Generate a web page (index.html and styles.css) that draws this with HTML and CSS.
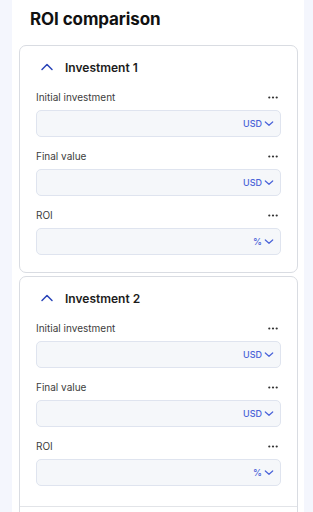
FILE: index.html
```html
<!DOCTYPE html>
<html>
<head>
<meta charset="utf-8">
<link rel="stylesheet" href="styles.css">
</head>
<body>
<div class="panel">
  <h1 class="title">ROI comparison</h1>

  <section class="card">
    <div class="card-head">
      <svg class="chev-up" width="14" height="10" viewBox="0 0 14 10"><path d="M2 7.5 L7 2.5 L12 7.5" fill="none" stroke="#2a45b8" stroke-width="1.5" stroke-linecap="round" stroke-linejoin="round"/></svg>
      <span class="card-title">Investment 1</span>
    </div>
    <div class="field">
      <div class="field-top"><span class="label">Initial investment</span><svg class="dots" width="10" height="3" viewBox="0 0 10 3"><circle cx="1.3" cy="1.5" r="1.1"/><circle cx="5" cy="1.5" r="1.1"/><circle cx="8.7" cy="1.5" r="1.1"/></svg></div>
      <div class="input"><span class="unit">USD</span><svg class="chev" width="10" height="7" viewBox="0 0 10 7"><path d="M1.3 2 L5 5.3 L8.7 2" fill="none" stroke="#4a63d8" stroke-width="1.2" stroke-linecap="round" stroke-linejoin="round"/></svg></div>
    </div>
    <div class="field">
      <div class="field-top"><span class="label">Final value</span><svg class="dots" width="10" height="3" viewBox="0 0 10 3"><circle cx="1.3" cy="1.5" r="1.1"/><circle cx="5" cy="1.5" r="1.1"/><circle cx="8.7" cy="1.5" r="1.1"/></svg></div>
      <div class="input"><span class="unit">USD</span><svg class="chev" width="10" height="7" viewBox="0 0 10 7"><path d="M1.3 2 L5 5.3 L8.7 2" fill="none" stroke="#4a63d8" stroke-width="1.2" stroke-linecap="round" stroke-linejoin="round"/></svg></div>
    </div>
    <div class="field">
      <div class="field-top"><span class="label">ROI</span><svg class="dots" width="10" height="3" viewBox="0 0 10 3"><circle cx="1.3" cy="1.5" r="1.1"/><circle cx="5" cy="1.5" r="1.1"/><circle cx="8.7" cy="1.5" r="1.1"/></svg></div>
      <div class="input"><span class="unit">%</span><svg class="chev" width="10" height="7" viewBox="0 0 10 7"><path d="M1.3 2 L5 5.3 L8.7 2" fill="none" stroke="#4a63d8" stroke-width="1.2" stroke-linecap="round" stroke-linejoin="round"/></svg></div>
    </div>
  </section>

  <section class="card">
    <div class="card-head">
      <svg class="chev-up" width="14" height="10" viewBox="0 0 14 10"><path d="M2 7.5 L7 2.5 L12 7.5" fill="none" stroke="#2a45b8" stroke-width="1.5" stroke-linecap="round" stroke-linejoin="round"/></svg>
      <span class="card-title">Investment 2</span>
    </div>
    <div class="field">
      <div class="field-top"><span class="label">Initial investment</span><svg class="dots" width="10" height="3" viewBox="0 0 10 3"><circle cx="1.3" cy="1.5" r="1.1"/><circle cx="5" cy="1.5" r="1.1"/><circle cx="8.7" cy="1.5" r="1.1"/></svg></div>
      <div class="input"><span class="unit">USD</span><svg class="chev" width="10" height="7" viewBox="0 0 10 7"><path d="M1.3 2 L5 5.3 L8.7 2" fill="none" stroke="#4a63d8" stroke-width="1.2" stroke-linecap="round" stroke-linejoin="round"/></svg></div>
    </div>
    <div class="field">
      <div class="field-top"><span class="label">Final value</span><svg class="dots" width="10" height="3" viewBox="0 0 10 3"><circle cx="1.3" cy="1.5" r="1.1"/><circle cx="5" cy="1.5" r="1.1"/><circle cx="8.7" cy="1.5" r="1.1"/></svg></div>
      <div class="input"><span class="unit">USD</span><svg class="chev" width="10" height="7" viewBox="0 0 10 7"><path d="M1.3 2 L5 5.3 L8.7 2" fill="none" stroke="#4a63d8" stroke-width="1.2" stroke-linecap="round" stroke-linejoin="round"/></svg></div>
    </div>
    <div class="field">
      <div class="field-top"><span class="label">ROI</span><svg class="dots" width="10" height="3" viewBox="0 0 10 3"><circle cx="1.3" cy="1.5" r="1.1"/><circle cx="5" cy="1.5" r="1.1"/><circle cx="8.7" cy="1.5" r="1.1"/></svg></div>
      <div class="input"><span class="unit">%</span><svg class="chev" width="10" height="7" viewBox="0 0 10 7"><path d="M1.3 2 L5 5.3 L8.7 2" fill="none" stroke="#4a63d8" stroke-width="1.2" stroke-linecap="round" stroke-linejoin="round"/></svg></div>
    </div>
    <div class="divider"></div>
  </section>
</div>
</body>
</html>
```

FILE: styles.css
```css
* { box-sizing: border-box; }
html, body {
  margin: 0;
  padding: 0;
  background: #f4f6fd;
  font-family: "Inter", "Noto Sans", sans-serif;
  height: 512px;
  overflow: hidden;
}
.panel {
  margin: 0 9px 0 12px;
  background: #ffffff;
  padding: 0 6px 0 7px;
  min-height: 512px;
}
.title {
  margin: 0;
  padding: 9px 0 0 11px;
  height: 45px;
  font-size: 17px;
  font-weight: 700;
  color: #111;
  letter-spacing: -0.1px;
}
.card {
  border: 1px solid #d9dce2;
  border-radius: 7px;
  padding: 0 16px 17px 16px;
  margin-bottom: 3px;
}
.card-head {
  display: flex;
  align-items: center;
  height: 42px;
  padding-left: 4px;
}
.chev-up { margin-right: 11px; }
.card-title {
  font-size: 12px;
  font-weight: 600;
  color: #1c1c1c;
}
.field + .field { margin-top: 10px; }
.field-top {
  display: flex;
  justify-content: space-between;
  align-items: center;
  height: 18px;
  margin-bottom: 4px;
}
.label {
  font-size: 10px;
  color: #3d3d3d;
}
.dots {
  display: block;
  fill: #333;
  margin-right: 3px;
}
.input {
  height: 27px;
  background: #f5f7fa;
  border: 1px solid #dfe4ef;
  border-radius: 5px;
  display: flex;
  align-items: center;
  justify-content: flex-end;
  padding-right: 6px;
  gap: 2px;
}
.unit {
  font-size: 9px;
  color: #4a63d8;
  font-weight: 500;
}
.chev { display: block; }
.divider {
  margin: 20px -16px 0;
  border-top: 1px solid #e2e4e8;
}
```
